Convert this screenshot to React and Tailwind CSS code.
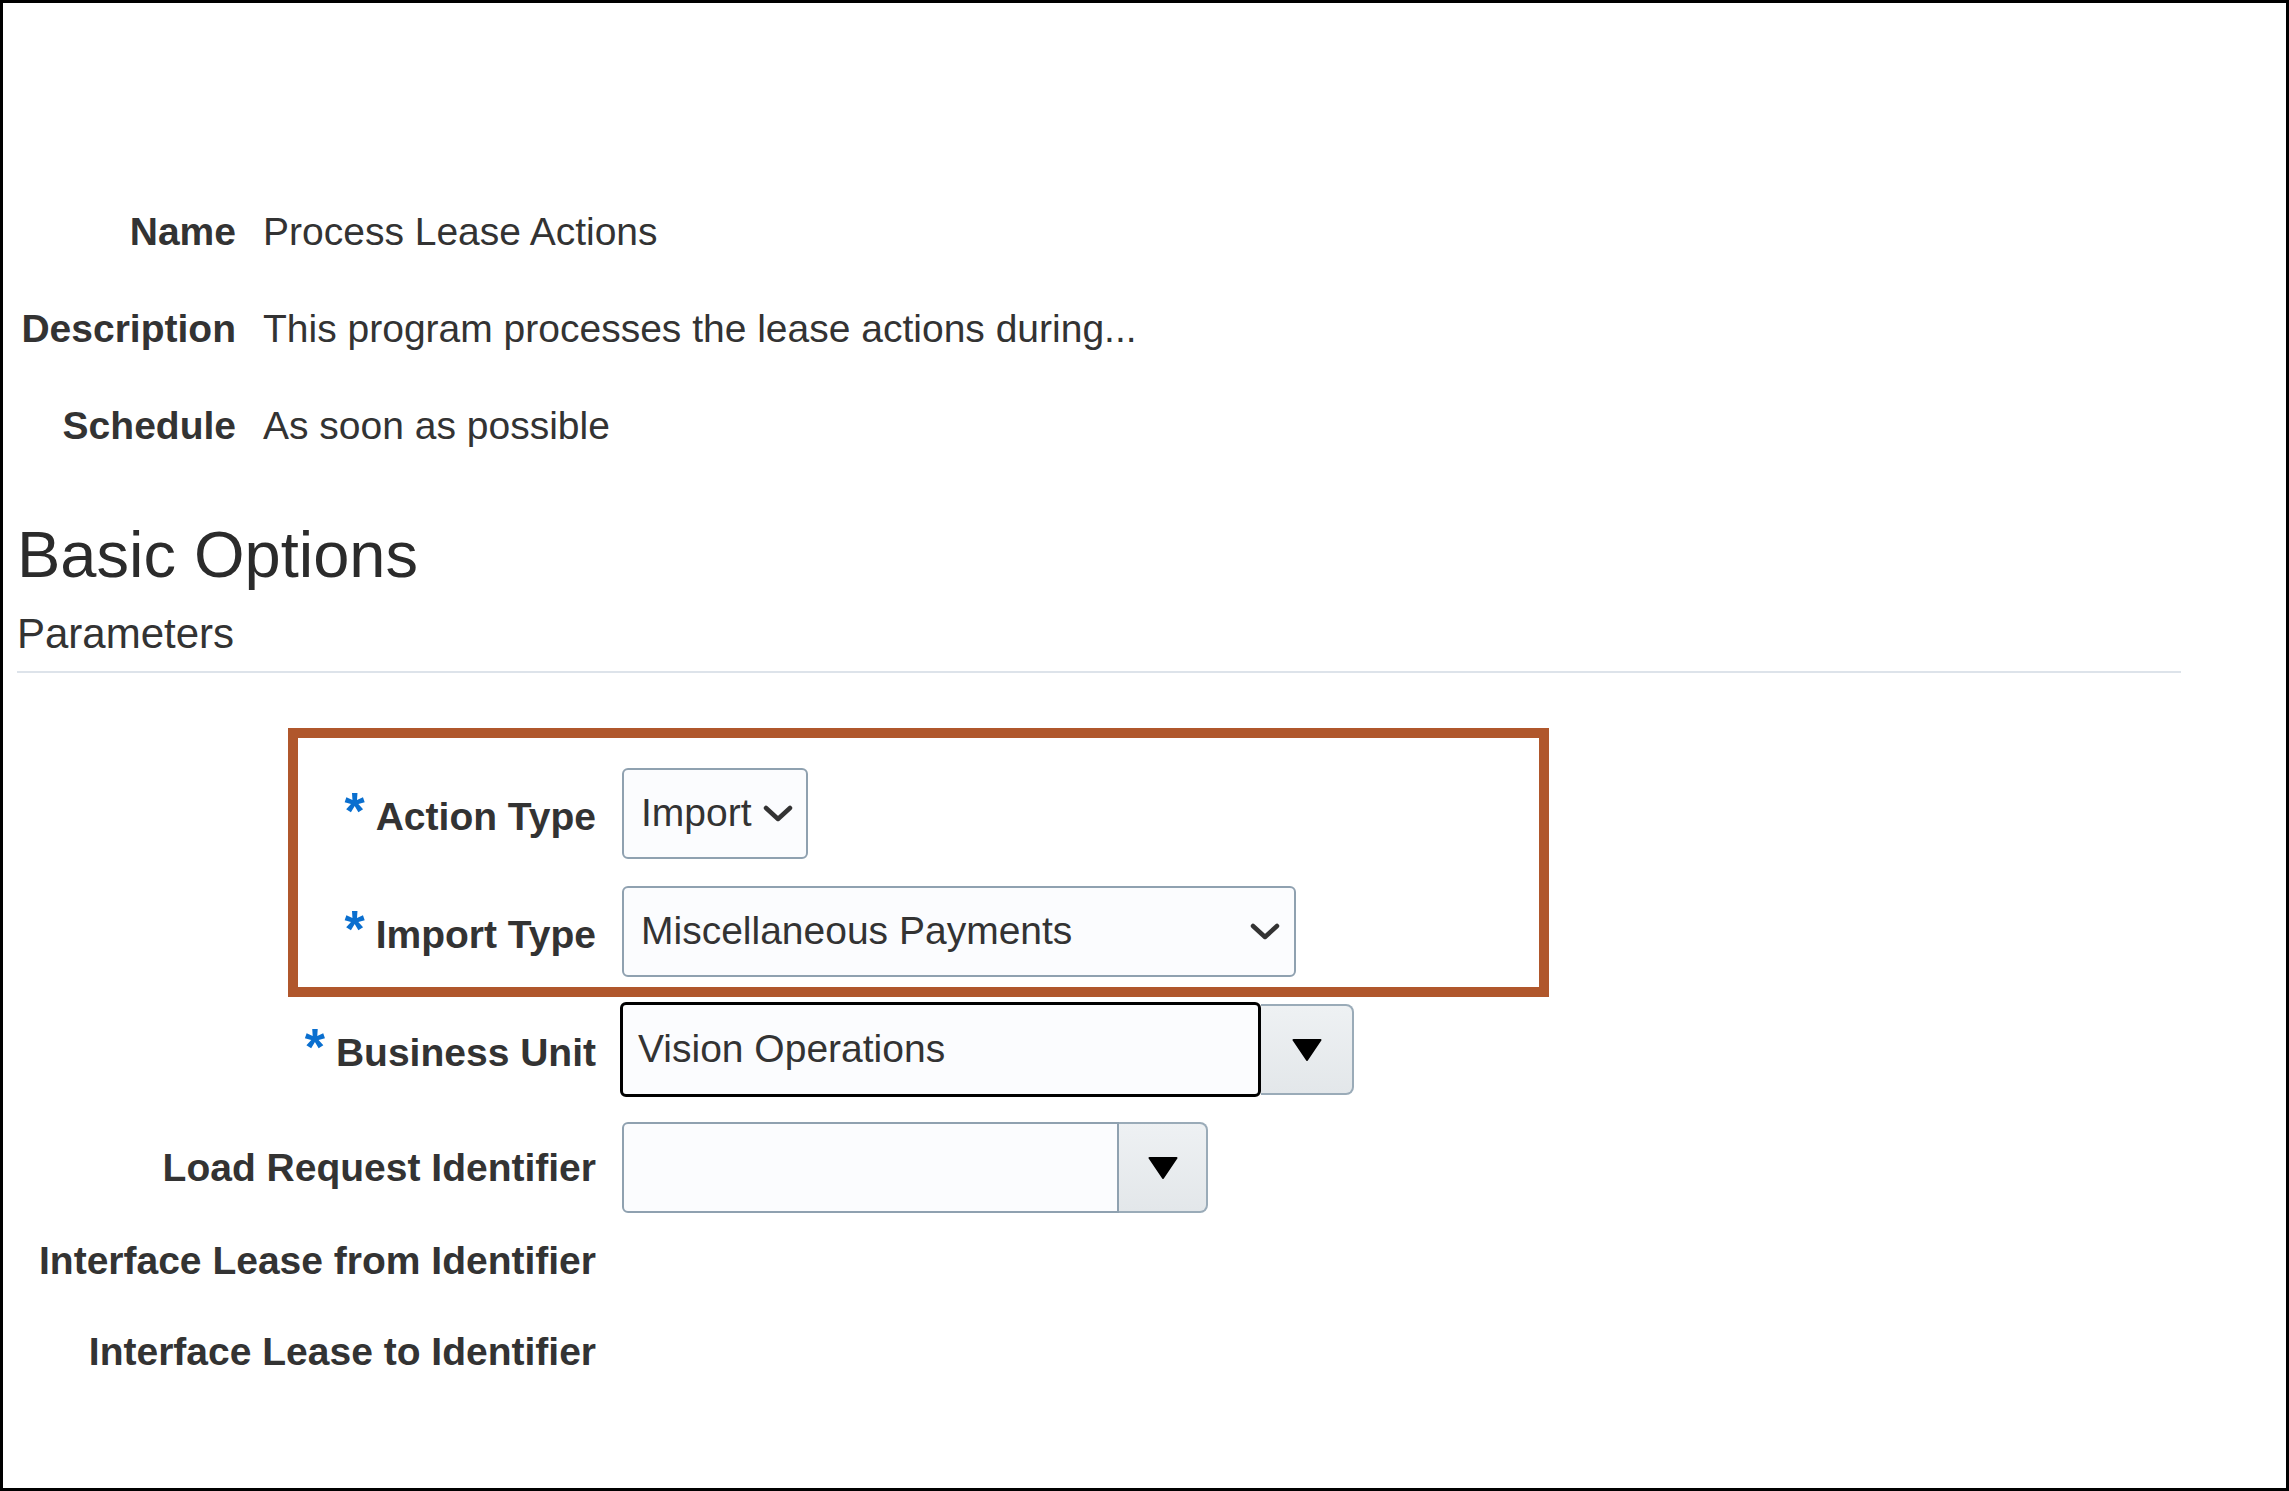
import React from "react";

function Chevron() {
  return (
    <svg width="30" height="17" viewBox="0 0 30 17" fill="none" className="shrink-0">
      <path d="M3 3 L15 14 L27 3" stroke="#333" strokeWidth="4.5" strokeLinecap="round" strokeLinejoin="round" />
    </svg>
  );
}

function Triangle() {
  return (
    <svg width="30" height="22" viewBox="0 0 30 22">
      <path d="M1.5 1 H28.5 L15 21 Z" fill="#000" stroke="#000" strokeWidth="2" strokeLinejoin="round" />
    </svg>
  );
}

function Asterisk() {
  return <span className="mr-[11px] align-[1px] text-[52px] font-bold text-[#0a6fcf]">*</span>;
}

function DropButton({ width }) {
  return (
    <div
      className={`flex h-[91px] items-center justify-center rounded-r-[8px] border-y-2 border-r-2 border-[#9aabb8] bg-gradient-to-b from-[#eef1f3] to-[#e3e7ea] ${width}`}
    >
      <Triangle />
    </div>
  );
}

function FormRow({ label, required, children, className = "" }) {
  return (
    <div className={`flex h-[91px] items-center ${className}`}>
      <div className="w-[579px] text-right font-bold leading-[45px]">
        {required && <Asterisk />}
        {label}
      </div>
      <div className="ml-[26px] flex items-center">{children}</div>
    </div>
  );
}

export default function App() {
  const details = [
    ["Name", "Process Lease Actions"],
    ["Description", "This program processes the lease actions during..."],
    ["Schedule", "As soon as possible"],
  ];

  return (
    <div className="h-[1491px] w-[2289px] overflow-hidden border-[3px] border-black bg-white px-[14px] font-['Liberation_Sans',Arial,sans-serif] text-[39px] text-[#333]">
      {/* Process details */}
      <div className="grid grid-cols-[219px_auto] gap-x-[27px] gap-y-[52px] pt-[206px] leading-[45px]">
        {details.map(([label, value]) => (
          <React.Fragment key={label}>
            <div className="text-right font-bold">{label}</div>
            <div>{value}</div>
          </React.Fragment>
        ))}
      </div>

      <h1 className="mt-[69px] text-[65px] leading-[75px] font-normal text-[#2b2b2b]">Basic Options</h1>
      <h2 className="mt-[18px] text-[42px] leading-[48px]">Parameters</h2>
      <div className="mt-[13px] h-[2px] w-[2164px] bg-[#dde3ea]" />

      {/* Parameters form */}
      <div className="relative mt-[95px]">
        <div className="pointer-events-none absolute left-[271px] -top-[40px] h-[269px] w-[1261px] border-[10px] border-[#b0572c]" />

        <FormRow label="Action Type" required>
          <div className="flex h-[91px] w-[186px] items-center justify-between rounded-[6px] border-2 border-[#8fa1b0] bg-[#fbfcfe] pl-[17px] pr-[13px]">
            <span>Import</span>
            <Chevron />
          </div>
        </FormRow>

        <FormRow label="Import Type" required className="mt-[27px]">
          <div className="flex h-[91px] w-[674px] items-center justify-between rounded-[6px] border-2 border-[#8fa1b0] bg-[#fbfcfe] pl-[17px] pr-[14px]">
            <span>Miscellaneous Payments</span>
            <Chevron />
          </div>
        </FormRow>

        <FormRow label="Business Unit" required className="mt-[27px]">
          <div className="-ml-[2px] flex h-[95px] w-[641px] items-center rounded-[6px] border-[3px] border-black bg-[#fbfcfe] pl-[15px]">
            Vision Operations
          </div>
          <DropButton width="w-[93px]" />
        </FormRow>

        <FormRow label="Load Request Identifier" className="mt-[27px]">
          <div className="h-[91px] w-[497px] rounded-l-[6px] border-2 border-[#8fa1b0] bg-[#fbfcfe]" />
          <DropButton width="w-[89px]" />
        </FormRow>

        <div className="mt-[25px] flex">
          <div className="w-[579px] text-right font-bold leading-[45px]">Interface Lease from Identifier</div>
        </div>
        <div className="mt-[46px] flex">
          <div className="w-[579px] text-right font-bold leading-[45px]">Interface Lease to Identifier</div>
        </div>
      </div>
    </div>
  );
}
